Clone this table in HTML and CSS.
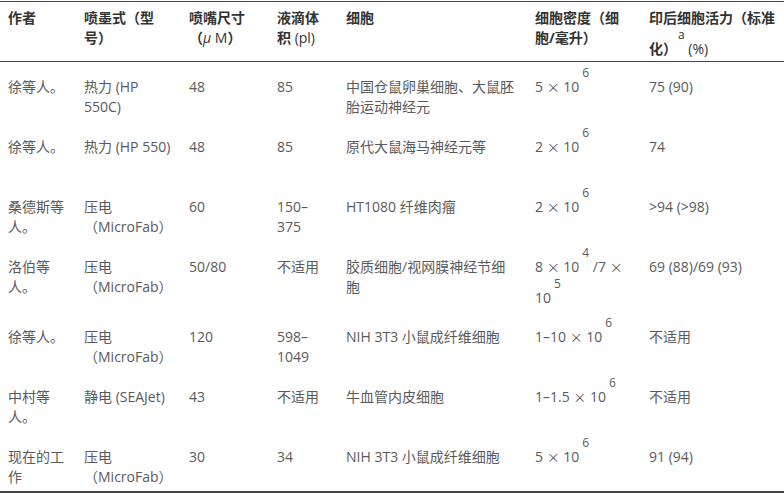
FILE: index.html
```html
<!DOCTYPE html>
<html lang="zh">
<head>
<meta charset="utf-8">
<link rel="stylesheet" href="styles.css">
</head>
<body>
<table class="tbl">
  <colgroup>
    <col class="c1"><col class="c2"><col class="c3"><col class="c4"><col class="c5"><col class="c6"><col class="c7">
  </colgroup>
  <thead>
    <tr>
      <th>作者</th>
      <th>喷墨式（型号）</th>
      <th>喷嘴尺寸（<i>μ</i><span class="lat"> M</span>）</th>
      <th>液滴体积<span class="lat"> (pl)</span></th>
      <th>细胞</th>
      <th>细胞密度（细胞/毫升）</th>
      <th>印后细胞活力（标准化）<sup class="sa">a</sup><span class="lat"> (%)</span></th>
    </tr>
  </thead>
  <tbody>
    <tr>
      <td>徐等人。</td>
      <td>热力 (HP 550C)</td>
      <td>48</td>
      <td>85</td>
      <td>中国仓鼠卵巢细胞、大鼠胚胎运动神经元</td>
      <td class="dens">5 <span class="x">×</span> 10<sup>6</sup></td>
      <td>75 (90)</td>
    </tr>
    <tr>
      <td>徐等人。</td>
      <td>热力 (HP 550)</td>
      <td>48</td>
      <td>85</td>
      <td>原代大鼠海马神经元等</td>
      <td class="dens">2 <span class="x">×</span> 10<sup>6</sup></td>
      <td>74</td>
    </tr>
    <tr>
      <td>桑德斯等人。</td>
      <td>压电（MicroFab）</td>
      <td>60</td>
      <td>150–375</td>
      <td>HT1080 纤维肉瘤</td>
      <td class="dens">2 <span class="x">×</span> 10<sup>6</sup></td>
      <td>&gt;94 (&gt;98)</td>
    </tr>
    <tr class="tall">
      <td>洛伯等人。</td>
      <td>压电（MicroFab）</td>
      <td>50/80</td>
      <td>不适用</td>
      <td>胶质细胞/视网膜神经节细胞</td>
      <td class="dens">8 <span class="x">×</span> 10<sup>4</sup> /7 <span class="x">×</span> 10<sup>5</sup></td>
      <td>69 (88)/69 (93)</td>
    </tr>
    <tr>
      <td>徐等人。</td>
      <td>压电（MicroFab）</td>
      <td>120</td>
      <td>598–1049</td>
      <td>NIH 3T3 小鼠成纤维细胞</td>
      <td class="dens">1–10 <span class="x">×</span> 10<sup>6</sup></td>
      <td>不适用</td>
    </tr>
    <tr>
      <td>中村等人。</td>
      <td>静电 (SEAJet)</td>
      <td>43</td>
      <td>不适用</td>
      <td>牛血管内皮细胞</td>
      <td class="dens">1–1.5 <span class="x">×</span> 10<sup>6</sup></td>
      <td>不适用</td>
    </tr>
    <tr>
      <td>现在的工作</td>
      <td>压电（MicroFab）</td>
      <td>30</td>
      <td>34</td>
      <td>NIH 3T3 小鼠成纤维细胞</td>
      <td class="dens">5 <span class="x">×</span> 10<sup>6</sup></td>
      <td>91 (94)</td>
    </tr>
  </tbody>
</table>
</body>
</html>
```
FILE: styles.css
```css
html, body {
  margin: 0;
  padding: 0;
  background: #ffffff;
}
body {
  padding-top: 1px;
  font-family: "Open Sans", "Noto Sans CJK SC", sans-serif;
  font-size: 14px;
  line-height: 20px;
  color: #5a5a5a;
}
.tbl {
  width: 784px;
  table-layout: fixed;
  border-collapse: collapse;
  border-top: 1px solid #444444;
  border-bottom: 2px solid #444444;
}
.c1 { width: 76px; }
.c2 { width: 105px; }
.c3 { width: 88px; }
.c4 { width: 69px; }
.c5 { width: 189px; }
.c6 { width: 114px; }
.c7 { width: 143px; }

th, td {
  text-align: left;
  vertical-align: top;
  padding: 15px 8px 0 8px;
}
thead tr {
  height: 60px;
  border-bottom: 1px solid #444444;
}
th {
  padding-top: 6px;
  font-weight: 700;
  color: #333333;
}
th i {
  font-style: italic;
  font-weight: 400;
}
th .lat {
  font-weight: 400;
}
tbody tr { height: 60px; }
tbody tr.tall { height: 70px; }

th:nth-child(1), td:nth-child(1) { padding-right: 8px; }
th:nth-child(2), td:nth-child(2) { padding-right: 8px; }
th:nth-child(3), td:nth-child(3) { padding-right: 16px; }
th:nth-child(4), td:nth-child(4) { padding-right: 13px; }
th:nth-child(5), td:nth-child(5) { padding-right: 11px; }
th:nth-child(6), td:nth-child(6) { padding-right: 16px; }
th:nth-child(7), td:nth-child(7) { padding-right: 5px; }

td.dens { padding-top: 4px; }

sup {
  font-size: 12px;
  line-height: 14px;
  vertical-align: 15px;
  margin-left: 3px;
  font-weight: 400;
  color: #5a5a5a;
}
sup.sa {
  margin-left: 1px;
  color: #333333;
}
.x {
  font-family: "Noto Sans CJK SC", sans-serif;
  font-size: 13px;
  line-height: 14px;
}
```
